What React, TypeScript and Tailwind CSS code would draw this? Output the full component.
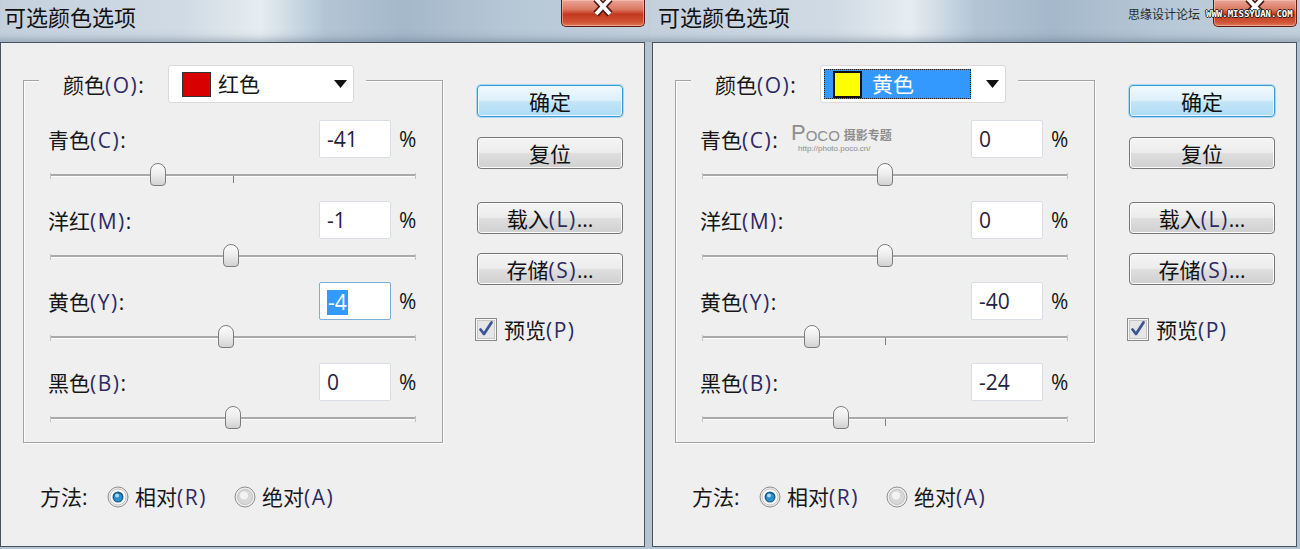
import React from "react";

type DialogData = {
  titlePad: string;
  closeMr: string;
  bodyPad: string;
  colorName: string;
  swatch: string;
  colorSelected: boolean;
  values: number[];
  focus: number;
  watermark: boolean;
};

const ROWS = [
  { cn: "青色", k: "C" },
  { cn: "洋红", k: "M" },
  { cn: "黄色", k: "Y" },
  { cn: "黑色", k: "B" },
];

const DIALOGS: DialogData[] = [
  {
    titlePad: "pl-[4px]",
    closeMr: "mr-[5px]",
    bodyPad: "pl-0 pr-[5px]",
    colorName: "红色",
    swatch: "bg-[#d80000]",
    colorSelected: false,
    values: [-41, -1, -4, 0],
    focus: 2,
    watermark: false,
  },
  {
    titlePad: "pl-[8px]",
    closeMr: "mr-[3px]",
    bodyPad: "pl-[2px] pr-[3px]",
    colorName: "黄色",
    swatch: "bg-[#ffff00]",
    colorSelected: true,
    values: [0, 0, -40, -24],
    focus: -1,
    watermark: true,
  },
];

// mnemonic label, e.g. 青色(C):
function Mn({ cn, k, colon = true }: { cn: string; k: string; colon?: boolean }) {
  return (
    <span className="whitespace-nowrap">
      {cn}
      <span className="text-[#2e2a63] tracking-[1.5px]">({k})</span>
      {colon ? ":" : ""}
    </span>
  );
}

function CloseButton({ className }: { className: string }) {
  return (
    <div
      className={`relative w-[84px] h-[27px] overflow-hidden flex justify-center rounded-b-[5px] border border-t-0 border-[#5e1d12] bg-[linear-gradient(180deg,#e9a597_0%,#dc7a64_35%,#c2391f_55%,#cf5336_85%,#e07a5a_100%)] shadow-[inset_0_0_0_1px_rgba(255,210,200,0.45)] ${className}`}
    >
      <svg className="-mt-[4px]" width="24" height="22" viewBox="0 0 24 22">
        <path d="M5 3 L19 18 M19 3 L5 18" stroke="#4a1a12" strokeWidth="7" />
        <path d="M5 3 L19 18 M19 3 L5 18" stroke="#ffffff" strokeWidth="4" />
      </svg>
    </div>
  );
}

function Slider({ value }: { value: number }) {
  const center = 183 + (value / 100) * 183;
  return (
    <div className="h-[43px] pl-[26px] pt-[16px]">
      <div className="relative w-[366px] h-[3px] border-t-2 border-[#a9a9a9] bg-[#fcfcfc]">
        <div className="absolute left-0 -top-[3px] w-px h-[6px] bg-[#c4c4c4]" />
        <div className="absolute right-0 -top-[3px] w-px h-[6px] bg-[#c4c4c4]" />
        <div className="absolute left-[183px] top-0 w-px h-[7px] bg-[#7d7d7d]" />
        <div
          className="absolute -top-[13px] w-[16px] h-[23px] rounded-t-[8px] rounded-b-[4px] border border-[#7c7c7c] bg-[linear-gradient(180deg,#fdfdfd_0%,#ececec_50%,#d2d2d2_100%)] shadow-[inset_0_1px_0_#fff]"
          style={{ left: center - 8 }}
        />
      </div>
    </div>
  );
}

function NumBox({ v, focused }: { v: number; focused: boolean }) {
  return (
    <div
      className={`w-[72px] h-[38px] bg-white rounded-[2px] border flex items-center pl-[7px] pt-[2px] text-[#2a2140] ${
        focused ? "border-[#7aaedb]" : "border-[#d9dee4]"
      }`}
    >
      {focused ? (
        <span className="bg-[#3399ff] text-white leading-[25px] px-[1px]">{v}</span>
      ) : (
        <span>{v}</span>
      )}
    </div>
  );
}

function Btn({ primary = false, children }: { primary?: boolean; children: React.ReactNode }) {
  return (
    <div
      className={`w-[146px] h-[32px] rounded-[4px] border flex items-center justify-center pt-[2px] leading-none text-[#111] ${
        primary
          ? "border-[#3a9bd6] bg-[linear-gradient(180deg,#f1f9fe_0%,#dcf0fb_48%,#c3e5f8_52%,#aedbf4_100%)] shadow-[0_0_0_1px_#a5d6f2,inset_0_0_0_1px_#e8f6fd]"
          : "border-[#787878] bg-[linear-gradient(180deg,#f5f5f5_0%,#ececec_48%,#dedede_52%,#d0d0d0_100%)] shadow-[inset_0_0_0_1px_#fbfbfb]"
      }`}
    >
      {children}
    </div>
  );
}

function CheckBox() {
  return (
    <svg width="22" height="23" viewBox="0 0 22 23">
      <rect x="0.5" y="0.5" width="21" height="22" fill="#f7f7f7" stroke="#8a8a8a" />
      <rect x="2.5" y="2.5" width="17" height="18" fill="#e6e6e6" stroke="#c6c6c6" />
      <path d="M5.5 11.5 L9 16 L16.5 4.5" fill="none" stroke="#3b5694" strokeWidth="2.8" strokeLinecap="round" strokeLinejoin="round" />
    </svg>
  );
}

function Radio({ on = false }: { on?: boolean }) {
  return (
    <svg width="22" height="22" viewBox="0 0 22 22">
      <circle cx="11" cy="11" r="10" fill="#ececec" stroke="#8e8e8e" />
      {on ? (
        <>
          <circle cx="11" cy="11" r="8" fill="#fdfdfd" stroke="#c8c8c8" />
          <circle cx="11" cy="11" r="5.5" fill="#1b5d8c" />
          <circle cx="11" cy="11.5" r="4" fill="#2f8fcc" />
          <circle cx="10" cy="9.5" r="2" fill="#a6dcf7" />
        </>
      ) : (
        <>
          <circle cx="11" cy="11" r="7.5" fill="#d8d8d8" stroke="#c4c4c4" />
          <circle cx="10" cy="9.5" r="4" fill="#f3f3f3" />
        </>
      )}
    </svg>
  );
}

function ColorSelect({ d }: { d: DialogData }) {
  return (
    <div className="w-[186px] h-[38px] bg-white border border-[#dadada] rounded-[3px] flex items-center">
      {d.colorSelected ? (
        <div className="ml-[3px] w-[147px] h-[30px] bg-[#3399ff] border border-dotted border-[#222] flex items-center pl-[8px]">
          <div className={`w-[29px] h-[27px] border-2 border-[#111] ${d.swatch}`} />
          <span className="ml-[10px] pt-[2px] text-white">{d.colorName}</span>
        </div>
      ) : (
        <div className="w-[150px] flex items-center pl-[13px]">
          <div className={`w-[29px] h-[25px] border border-[#333] ${d.swatch}`} />
          <span className="ml-[7px] pt-[2px]">{d.colorName}</span>
        </div>
      )}
      <svg className="ml-[15px]" width="13" height="8" viewBox="0 0 13 8">
        <path d="M0 0 H13 L6.5 8 Z" fill="#111" />
      </svg>
    </div>
  );
}

function Dialog({ d }: { d: DialogData }) {
  return (
    <div className="w-[650px] h-full flex flex-col">
      {/* title bar */}
      <div className="relative h-[42px] flex items-start justify-between bg-[linear-gradient(90deg,#c4d1dd_0%,#cfdae4_28%,#e6edf2_40%,#b3c5d5_50%,#a4b8cb_62%,#b6c7d6_78%,#c3d0dc_100%)] shadow-[inset_0_-10px_8px_-8px_rgba(70,90,110,0.45)]">
        <span className={`pt-[5px] text-[22px] leading-[24px] text-[#111] ${d.titlePad}`}>可选颜色选项</span>
        <CloseButton className={d.closeMr} />
        {d.watermark && (
          <div className="absolute left-[478px] top-[6px] flex items-center gap-[6px]">
            <span className="text-[12px] text-[#2b2b2b]">思缘设计论坛</span>
            <span className="text-[9px] font-bold text-white font-['DejaVu_Sans_Mono',monospace] [text-shadow:1px_0_#222,-1px_0_#222,0_1px_#222,0_-1px_#222]">
              WWW.MISSYUAN.COM
            </span>
          </div>
        )}
      </div>

      {/* body */}
      <div className={`flex-1 flex pb-[2px] bg-[#b3c3d2] ${d.bodyPad}`}>
        <div className="relative w-[645px] h-full border border-[#4a5461] bg-[#efefef] flex flex-col text-[21px] text-[#161616]">
          <div className="flex items-start">
            {/* group box */}
            <div className="ml-[22px] mt-[37px] w-[420px] h-[363px] border border-[#a3a3a3] shadow-[inset_1px_1px_0_#fdfdfd,1px_1px_0_#fdfdfd] flex flex-col">
              <div className="-mt-[16px] ml-[15px] w-fit bg-[#efefef] flex items-center pl-[24px] pr-[12px]">
                <span className="w-[105px] pt-[4px]">
                  <Mn cn="颜色" k="O" />
                </span>
                <ColorSelect d={d} />
              </div>
              <div className="mt-[17px] flex flex-col">
                {ROWS.map((r, i) => (
                  <div key={r.k} className="flex flex-col">
                    <div className="h-[38px] flex items-center pl-[24px]">
                      <span className="w-[271px] pt-[4px]">
                        <Mn cn={r.cn} k={r.k} />
                      </span>
                      <NumBox v={d.values[i]} focused={d.focus === i} />
                      <span className="ml-[8px] pt-[2px]">%</span>
                    </div>
                    <Slider value={d.values[i]} />
                  </div>
                ))}
              </div>
            </div>

            {/* buttons */}
            <div className="ml-[34px] mt-[42px] flex flex-col">
              <Btn primary>确定</Btn>
              <div className="mt-[20px]">
                <Btn>复位</Btn>
              </div>
              <div className="mt-[33px]">
                <Btn>
                  <Mn cn="载入" k="L" colon={false} />...
                </Btn>
              </div>
              <div className="mt-[19px]">
                <Btn>
                  <Mn cn="存储" k="S" colon={false} />...
                </Btn>
              </div>
              <div className="mt-[28px] -ml-[2px] flex items-center gap-[7px]">
                <CheckBox />
                <span className="pt-[2px]">
                  <Mn cn="预览" k="P" colon={false} />
                </span>
              </div>
            </div>
          </div>

          {/* method */}
          <div className="mt-[39px] h-[30px] pl-[39px] flex items-center">
            <span className="w-[67px] pt-[2px]">方法:</span>
            <Radio on />
            <span className="ml-[6px] w-[99px] pt-[2px]">
              <Mn cn="相对" k="R" colon={false} />
            </span>
            <Radio />
            <span className="ml-[6px] pt-[2px]">
              <Mn cn="绝对" k="A" colon={false} />
            </span>
          </div>

          {d.watermark && (
            <div className="absolute left-[138px] top-[80px] flex flex-col text-[#8d8d8d] leading-none">
              <div className="flex items-end h-[20px]">
                <span className="text-[22px] leading-[20px] font-['Liberation_Sans',sans-serif]">P</span>
                <span className="text-[15px] leading-[15px] font-['Liberation_Sans',sans-serif]">OCO</span>
                <span className="ml-[4px] text-[12px] leading-[14px] font-bold">摄影专题</span>
              </div>
              <div className="mt-[1px] pl-[7px] text-[8px] leading-[9px] font-['Liberation_Sans',sans-serif]">http://photo.poco.cn/</div>
            </div>
          )}
        </div>
      </div>
    </div>
  );
}

export default function App() {
  return (
    <div className="w-[1300px] h-[549px] overflow-hidden flex bg-[#b3c3d2] font-['Open_Sans','Noto_Sans_CJK_SC',sans-serif]">
      {DIALOGS.map((d, i) => (
        <Dialog key={i} d={d} />
      ))}
    </div>
  );
}
